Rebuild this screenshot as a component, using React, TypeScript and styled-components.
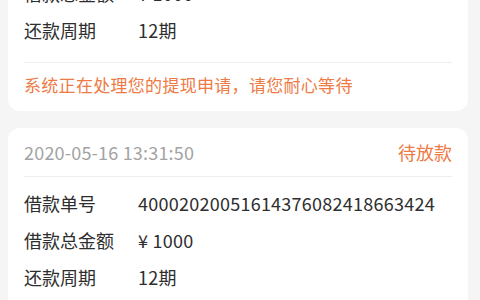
import styled, { createGlobalStyle } from "styled-components"

const GlobalStyle = createGlobalStyle`
    html, body {
        margin: 0;
        padding: 0;
        background: #f5f5f5;
        font-family: "Noto Sans CJK SC", "Noto Sans", sans-serif;
    }
`

const Page = styled.div`
    height: 300px;
    overflow: hidden;
`
const List = styled.div`
    margin-top: -119px;
    display: flex;
    flex-direction: column;
    gap: 17px;
    padding: 0 12px 0 8px;
`
const Card = styled.div`
    background: #fff;
    border-radius: 12px;
    padding: 0 16px;
`
const Header = styled.div`
    height: 48px;
    display: flex;
    align-items: center;
    justify-content: space-between;
    border-bottom: 1px solid #eeeeee;
`
const Time = styled.span`
    font-size: 18px;
    letter-spacing: 0.2px;
    color: #a3a3a3;
`
const Status = styled.span`
    font-size: 18px;
    color: #ee7a45;
`
const Body = styled.div`
    padding: 7px 0 14px;
`
const Row = styled.div`
    display: flex;
    height: 37px;
    align-items: center;
    font-size: 18px;
    color: #2e2e2e;
`
const Label = styled.span`
    width: 114px;
    flex-shrink: 0;
`
const Value = styled.span`
    letter-spacing: 0.25px;
`
const Footer = styled.div`
    border-top: 1px solid #eeeeee;
    padding: 10px 0 14px;
    line-height: 24px;
    font-size: 17px;
    letter-spacing: 0.3px;
    color: #ee7a45;
`

type TLoan = {
    time: string
    status: string
    no: string
    amount: string
    period: string
    note?: string
}

const loans: TLoan[] = [
    {
        time: '2020-05-16 13:31:50',
        status: '待放款',
        no: '40002020051614376082418663424',
        amount: '¥ 1000',
        period: '12期',
        note: '系统正在处理您的提现申请，请您耐心等待',
    },
    {
        time: '2020-05-16 13:31:50',
        status: '待放款',
        no: '40002020051614376082418663424',
        amount: '¥ 1000',
        period: '12期',
    },
]

export default function App() {
    return (
        <>
            <GlobalStyle />
            <Page>
                <List>
                    {loans.map((item, i) => (
                        <Card key={i}>
                            <Header>
                                <Time>{item.time}</Time>
                                <Status>{item.status}</Status>
                            </Header>
                            <Body>
                                <Row><Label>借款单号</Label><Value>{item.no}</Value></Row>
                                <Row><Label>借款总金额</Label><Value>{item.amount}</Value></Row>
                                <Row><Label>还款周期</Label><Value>{item.period}</Value></Row>
                            </Body>
                            {item.note && <Footer>{item.note}</Footer>}
                        </Card>
                    ))}
                </List>
            </Page>
        </>
    )
}
